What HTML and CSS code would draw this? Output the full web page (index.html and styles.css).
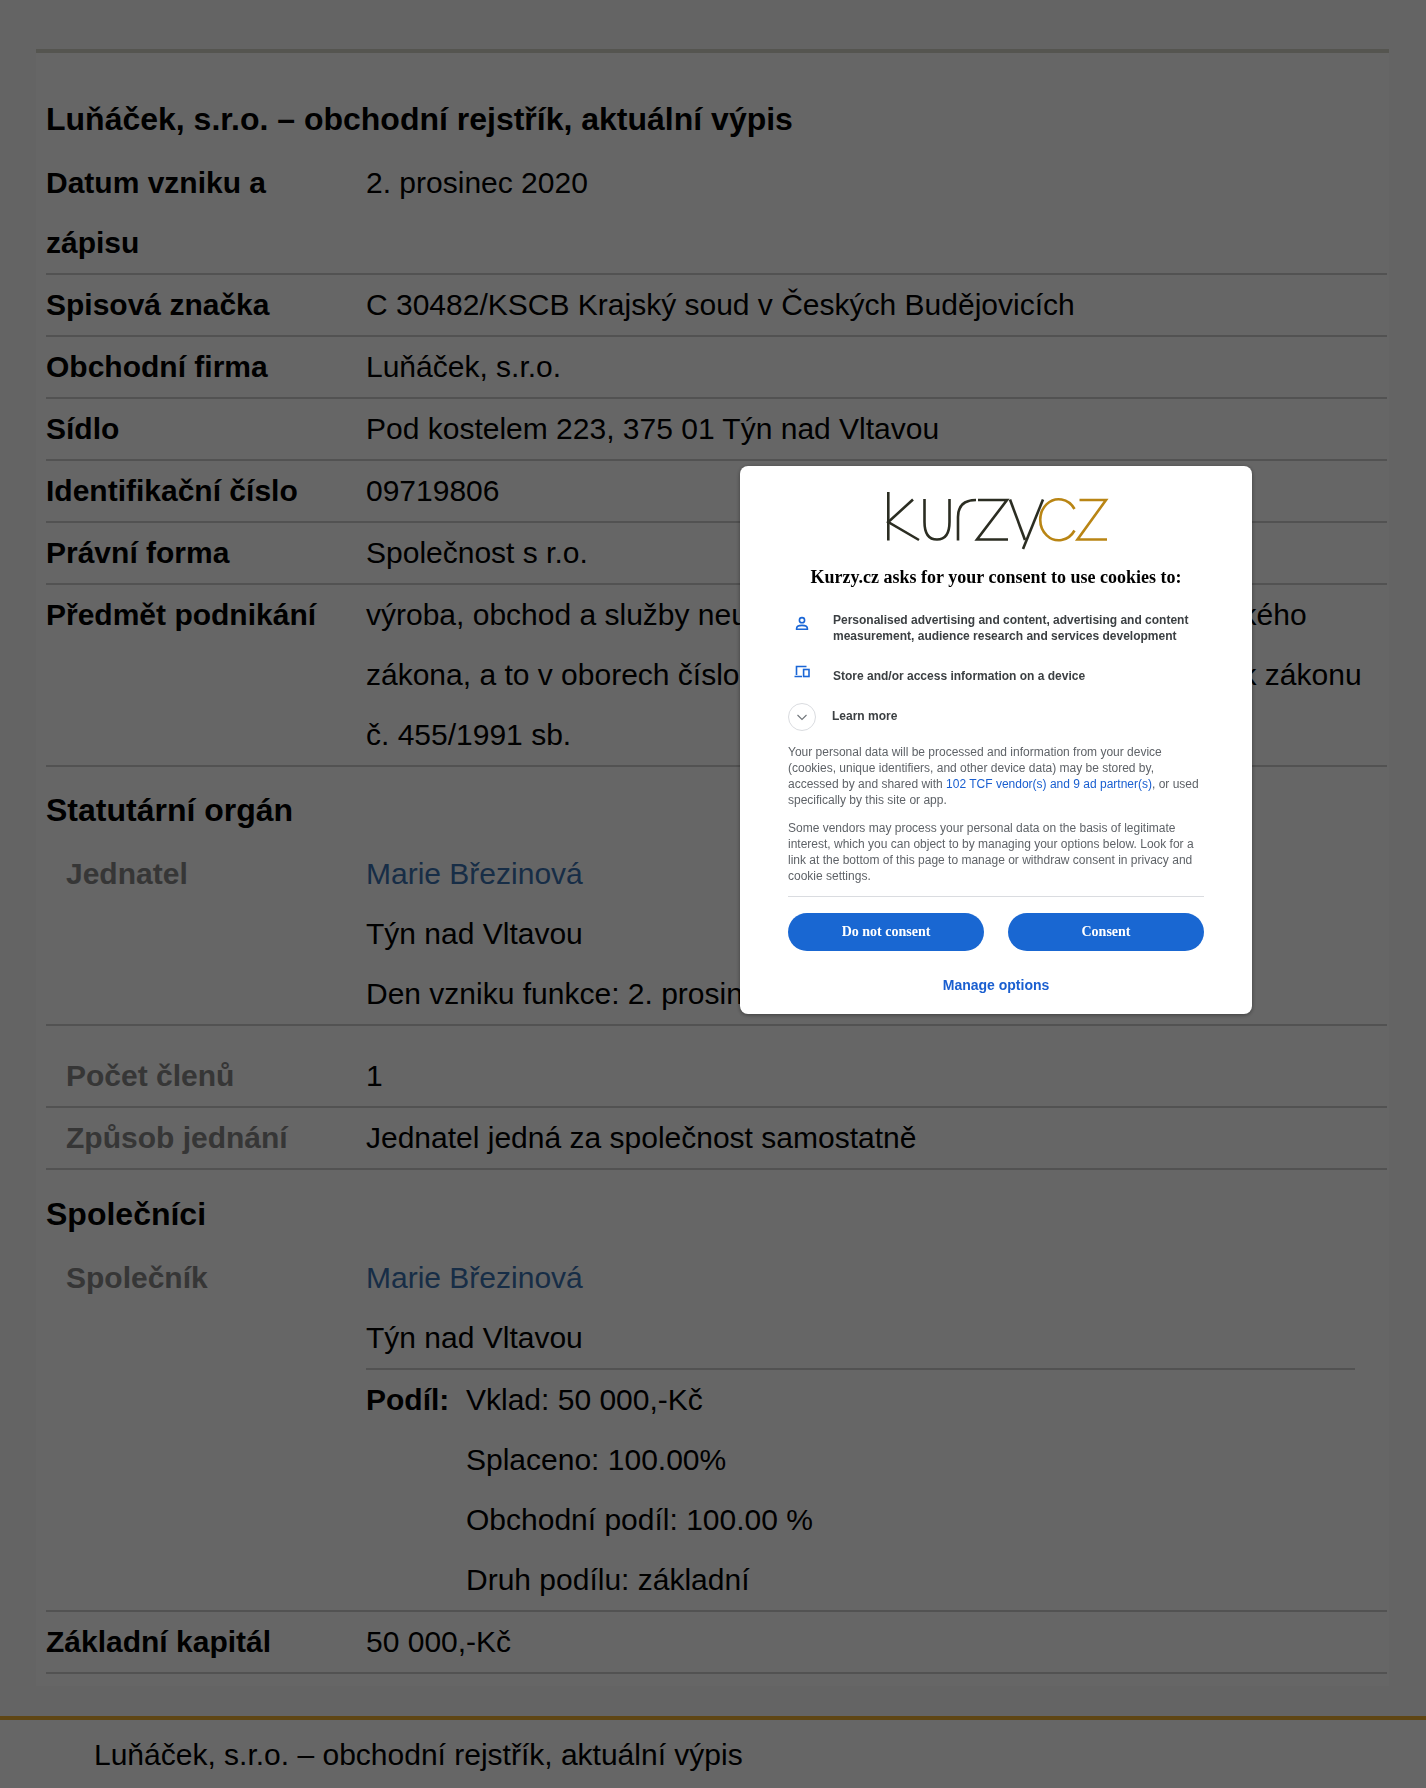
FILE: index.html
```html
<!DOCTYPE html>
<html lang="cs">
<head>
<meta charset="utf-8">
<title>Luňáček, s.r.o. – obchodní rejstřík, aktuální výpis</title>
<link rel="stylesheet" href="styles.css">
</head>
<body>
<main class="wrap">
  <h2 class="title">Luňáček, s.r.o. – obchodní rejstřík, aktuální výpis</h2>
  <div class="row"><div class="label">Datum vzniku a zápisu</div><div class="value">2. prosinec 2020</div></div>
  <div class="row"><div class="label">Spisová značka</div><div class="value">C 30482/KSCB Krajský soud v Českých Budějovicích</div></div>
  <div class="row"><div class="label">Obchodní firma</div><div class="value">Luňáček, s.r.o.</div></div>
  <div class="row"><div class="label">Sídlo</div><div class="value">Pod kostelem 223, 375 01 Týn nad Vltavou</div></div>
  <div class="row"><div class="label">Identifikační číslo</div><div class="value">09719806</div></div>
  <div class="row"><div class="label">Právní forma</div><div class="value">Společnost s r.o.</div></div>
  <div class="row"><div class="label">Předmět podnikání</div><div class="value">výroba, obchod a služby neuvedené v přílohách 1 až 3 živnostenského zákona, a to v oborech číslo 1 až 80, uvedených v příloze číslo 4, k zákonu č. 455/1991 sb.</div></div>

  <h3 class="section">Statutární orgán</h3>
  <div class="row"><div class="label sub">Jednatel</div><div class="value"><a class="person" href="#">Marie Březinová</a><br>Týn nad Vltavou<br>Den vzniku funkce: 2. prosinec 2020</div></div>
  <div class="row spaced"><div class="label sub">Počet členů</div><div class="value">1</div></div>
  <div class="row"><div class="label sub">Způsob jednání</div><div class="value">Jednatel jedná za společnost samostatně</div></div>

  <h3 class="section partners">Společníci</h3>
  <div class="row">
    <div class="label sub">Společník</div>
    <div class="value">
      <div class="owner"><a class="person" href="#">Marie Březinová</a><br>Týn nad Vltavou</div>
      <div class="share">
        <div class="share-label">Podíl:</div>
        <div>Vklad: 50 000,-Kč<br>Splaceno: 100.00%<br>Obchodní podíl: 100.00 %<br>Druh podílu: základní</div>
      </div>
    </div>
  </div>
  <div class="row"><div class="label">Základní kapitál</div><div class="value">50 000,-Kč</div></div>
</main>
<footer class="foot">Luňáček, s.r.o. – obchodní rejstřík, aktuální výpis</footer>

<div class="overlay">
  <div class="dialog">
    <svg class="logo" viewBox="0 0 270 80" width="270" height="80" role="img" aria-label="kurzy.cz">
      <g class="logo-dark">
        <path d="M27.3 12V60.500"/>
        <path d="M52 19.500L27.300 42L58 60"/>
        <path d="M63.500 19V42Q63.500 59.500 76 59.500T88.500 42V19"/>
        <path d="M97 60.500V37Q97 20 115 20"/>
        <path d="M117 20H146L116 59.500H147"/>
        <path d="M149 19.500L164 60"/>
        <path d="M182 19.500L162 69"/>
      </g>
      <g class="logo-gold">
        <path d="M213.500 29A18.500 20.500 0 1 0 213.500 50.500"/>
        <path d="M218.500 20H245L216.500 59.500H246"/>
      </g>
    </svg>
    <h1 class="dialog-title">Kurzy.cz asks for your consent to use cookies to:</h1>
    <div class="purpose first">
      <svg class="icon" viewBox="0 0 16 16" width="16" height="16"><circle cx="8" cy="4.200" r="2.600"/><path d="M2.600 12.600c0-2 2.600-3.200 5.400-3.200s5.400 1.200 5.400 3.200v.6H2.600z"/></svg>
      <div class="purpose-text">Personalised advertising and content, advertising and content measurement, audience research and services development</div>
    </div>
    <div class="purpose second">
      <svg class="icon" viewBox="0 0 16 14" width="16" height="14"><path d="M2.500 10V1.500H12.500M.5 11.500H8"/><rect x="9.600" y="4.500" width="5.400" height="7"/></svg>
      <div class="purpose-text">Store and/or access information on a device</div>
    </div>
    <div class="more">
      <span class="chevron"><svg viewBox="0 0 12 12" width="12" height="12"><path d="M1.500 4L6 8.500L10.500 4"/></svg></span>
      <span class="purpose-text">Learn more</span>
    </div>
    <p class="copy">Your personal data will be processed and information from your device (cookies, unique identifiers, and other device data) may be stored by, accessed by and shared with <a href="#">102 TCF vendor(s) and 9 ad partner(s)</a>, or used specifically by this site or app.</p>
    <p class="copy">Some vendors may process your personal data on the basis of legitimate interest, which you can object to by managing your options below. Look for a link at the bottom of this page to manage or withdraw consent in privacy and cookie settings.</p>
    <div class="buttons">
      <button class="btn">Do not consent</button>
      <button class="btn">Consent</button>
    </div>
    <a class="manage" href="#">Manage options</a>
  </div>
</div>
</body>
</html>
```

FILE: styles.css
```css
* { box-sizing: border-box; }
html, body { margin: 0; padding: 0; }
body {
  background: #fafafa;
  color: #000;
  font-family: "Liberation Sans", Arial, sans-serif;
  font-size: 30px;
  line-height: 60px;
  overflow: hidden;
}
.wrap {
  margin: 49px 37px 0 36px;
  padding: 36px 2px 12px 10px;
  background: #fff;
  border-top: 4px solid #d4d4c8;
}
.title, .section {
  margin: 0;
  font-size: 32px;
  line-height: 60px;
  font-weight: 700;
}
.title { margin-bottom: 4px; }
.section { padding: 13px 0 4px; }
.partners { padding-top: 14px; }
.row {
  display: grid;
  grid-template-columns: 320px 1fr;
  border-bottom: 2px solid #ccc;
}
.spaced { padding-top: 20px; }
.label { font-weight: 700; padding-right: 30px; }
.sub { color: #888; padding-left: 20px; }
.person { color: #3a70b0; text-decoration: none; }
.owner { width: 989px; border-bottom: 2px solid #ccc; }
.share { display: flex; }
.share-label { width: 100px; font-weight: 700; }
.foot {
  margin-top: 30px;
  border-top: 4px solid #eeb032;
  padding: 5px 0 0 94px;
  height: 80px;
  background: #fff;
}
.overlay {
  position: fixed;
  inset: 0;
  background: rgba(0, 0, 0, .6);
}
.dialog {
  position: absolute;
  left: 740px;
  top: 466px;
  width: 512px;
  height: 548px;
  padding: 14px 48px 0;
  background: #fff;
  border-radius: 8px;
  box-shadow: 0 1px 4px rgba(0, 0, 0, .4);
  font-size: 12px;
  line-height: 16px;
  color: #5f6368;
}
.logo { display: block; margin: 0 auto 0; }
.logo path { fill: none; stroke-width: 2.6; }
.logo-dark path { stroke: #2b2d22; }
.logo-gold path { stroke: #b98514; }
.dialog-title {
  margin: 5px 0 0;
  font-family: "Liberation Serif", "Times New Roman", serif;
  font-size: 18px;
  line-height: 24px;
  font-weight: 700;
  text-align: center;
  color: #000;
}
.purpose { display: flex; align-items: flex-start; }
.purpose-text { font-weight: 700; color: #3c4043; }
.first { margin-top: 23px; }
.second { margin-top: 24px; }
.icon { flex: none; margin: 0 23px 0 6px; fill: none; stroke: #1a66d6; stroke-width: 1.6; }
.first .icon { margin-top: 4px; }
.second .icon { margin-top: -3px; }
.more { display: flex; align-items: center; margin-top: 19px; }
.more .purpose-text { margin-left: 16px; margin-top: -3px; }
.chevron {
  width: 28px;
  height: 28px;
  border: 1px solid #dadce0;
  border-radius: 50%;
  display: flex;
  align-items: center;
  justify-content: center;
}
.chevron svg { fill: none; stroke: #70757a; stroke-width: 1.1; }
.copy { margin: 13px 0 0; }
.copy + .copy { margin-top: 12px; }
.copy a { color: #1a5fd0; text-decoration: none; }
.buttons {
  display: flex;
  gap: 24px;
  margin-top: 12px;
  padding-top: 16px;
  border-top: 1px solid #dadce0;
}
.btn {
  flex: 1;
  height: 38px;
  border: 0;
  border-radius: 19px;
  background: #1967d2;
  color: #fff;
  font-family: "Liberation Serif", "Times New Roman", serif;
  font-size: 14px;
  font-weight: 700;
}
.manage {
  display: block;
  margin-top: 24px;
  text-align: center;
  font-size: 14px;
  line-height: 20px;
  font-weight: 700;
  color: #1a5fd0;
  text-decoration: none;
}
```
